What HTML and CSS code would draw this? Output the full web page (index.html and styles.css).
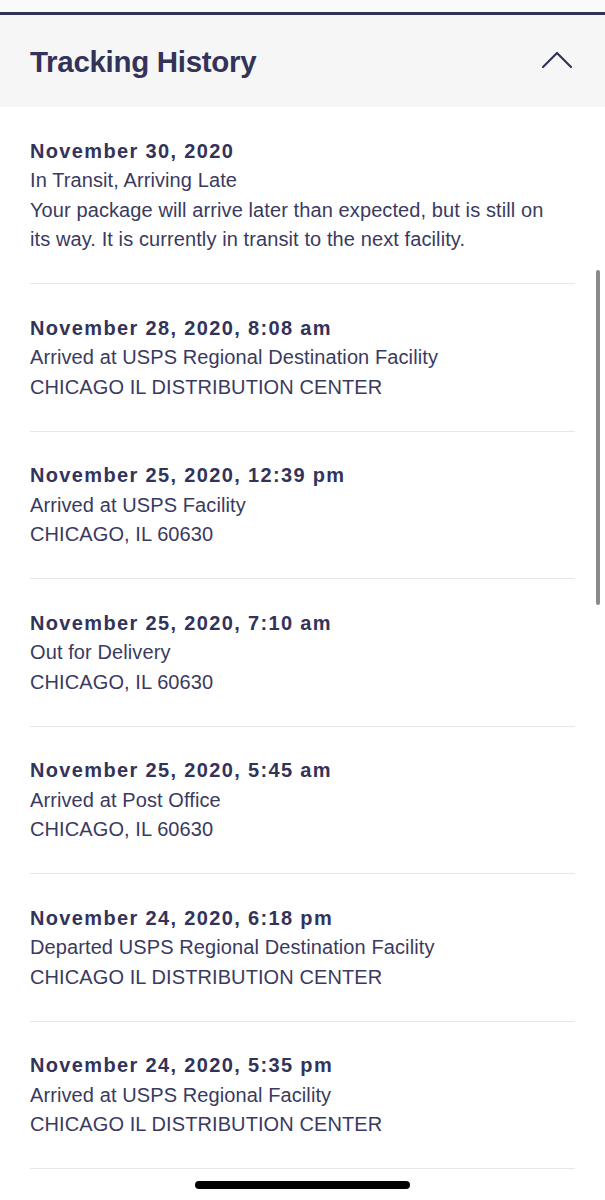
FILE: index.html
```html
<!DOCTYPE html>
<html lang="en">
<head>
  <meta charset="utf-8">
  <title>Tracking History</title>
  <meta name="viewport" content="width=device-width, initial-scale=1.0">
  <link rel="stylesheet" href="styles.css">
</head>
<body>
  <div class="topline"></div>

  <div class="panel-head">
    <h2>Tracking History</h2>
    <svg class="chevron" width="32" height="20" viewBox="0 0 32 20">
      <polyline points="2,17 16,3 30,17" fill="none" stroke="#33335a" stroke-width="2.2" stroke-linecap="round" stroke-linejoin="round"/>
    </svg>
  </div>

  <div class="history">
    <div class="event">
      <div class="date">November 30, 2020</div>
      <div class="line">In Transit, Arriving Late</div>
      <div class="line note">Your package will arrive later than expected, but is still on its way. It is currently in transit to the next facility.</div>
    </div>
    <div class="event">
      <div class="date">November 28, 2020, 8:08 am</div>
      <div class="line">Arrived at USPS Regional Destination Facility</div>
      <div class="line">CHICAGO IL DISTRIBUTION CENTER</div>
    </div>
    <div class="event">
      <div class="date">November 25, 2020, 12:39 pm</div>
      <div class="line">Arrived at USPS Facility</div>
      <div class="line">CHICAGO, IL 60630</div>
    </div>
    <div class="event">
      <div class="date">November 25, 2020, 7:10 am</div>
      <div class="line">Out for Delivery</div>
      <div class="line">CHICAGO, IL 60630</div>
    </div>
    <div class="event">
      <div class="date">November 25, 2020, 5:45 am</div>
      <div class="line">Arrived at Post Office</div>
      <div class="line">CHICAGO, IL 60630</div>
    </div>
    <div class="event">
      <div class="date">November 24, 2020, 6:18 pm</div>
      <div class="line">Departed USPS Regional Destination Facility</div>
      <div class="line">CHICAGO IL DISTRIBUTION CENTER</div>
    </div>
    <div class="event">
      <div class="date">November 24, 2020, 5:35 pm</div>
      <div class="line">Arrived at USPS Regional Facility</div>
      <div class="line">CHICAGO IL DISTRIBUTION CENTER</div>
    </div>
  </div>

  <!-- scroll indicator + home bar sit on top of the list -->
  <div class="scrollbar"></div>
  <div class="home-bar"></div>
</body>
</html>
```

FILE: styles.css
```css
* { margin: 0; padding: 0; box-sizing: border-box; }
body {
  font-family: "Liberation Sans", Arial, sans-serif;
  background: #fff;
  color: #33335a;
  width: 605px;
  min-height: 1200px;
  overflow: hidden;
}
.topline {
  height: 15px;
  background: #fafafa;
  border-bottom: 3px solid #33335a;
}
.panel-head {
  background: #f6f6f6;
  height: 92px;
  padding: 0 32px 0 30px;
  display: flex;
  align-items: center;
  justify-content: space-between;
}
.panel-head h2 {
  font-size: 29.5px;
  font-weight: bold;
  color: #33335a;
  letter-spacing: -0.3px;
  margin-top: 2px;
}
.chevron {
  margin-top: -2px;
}
.history {
  padding: 0 30px;
}
.event {
  padding: 29.5px 0 28.5px;
  border-bottom: 1px solid #e8e8ec;
  font-size: 20px;
  line-height: 29.5px;
}
.date {
  font-weight: bold;
  letter-spacing: 1.35px;
}
.line {
  color: #3a3a60;
  letter-spacing: 0.1px;
}
.note {
  max-width: 528px;
}
.scrollbar {
  position: fixed;
  left: 596px;
  top: 270px;
  width: 4px;
  height: 335px;
  border-radius: 2px;
  background: #8a8a8a;
}
.home-bar {
  position: fixed;
  left: 195px;
  top: 1181px;
  width: 215px;
  height: 8px;
  border-radius: 4px;
  background: #000;
}
```
